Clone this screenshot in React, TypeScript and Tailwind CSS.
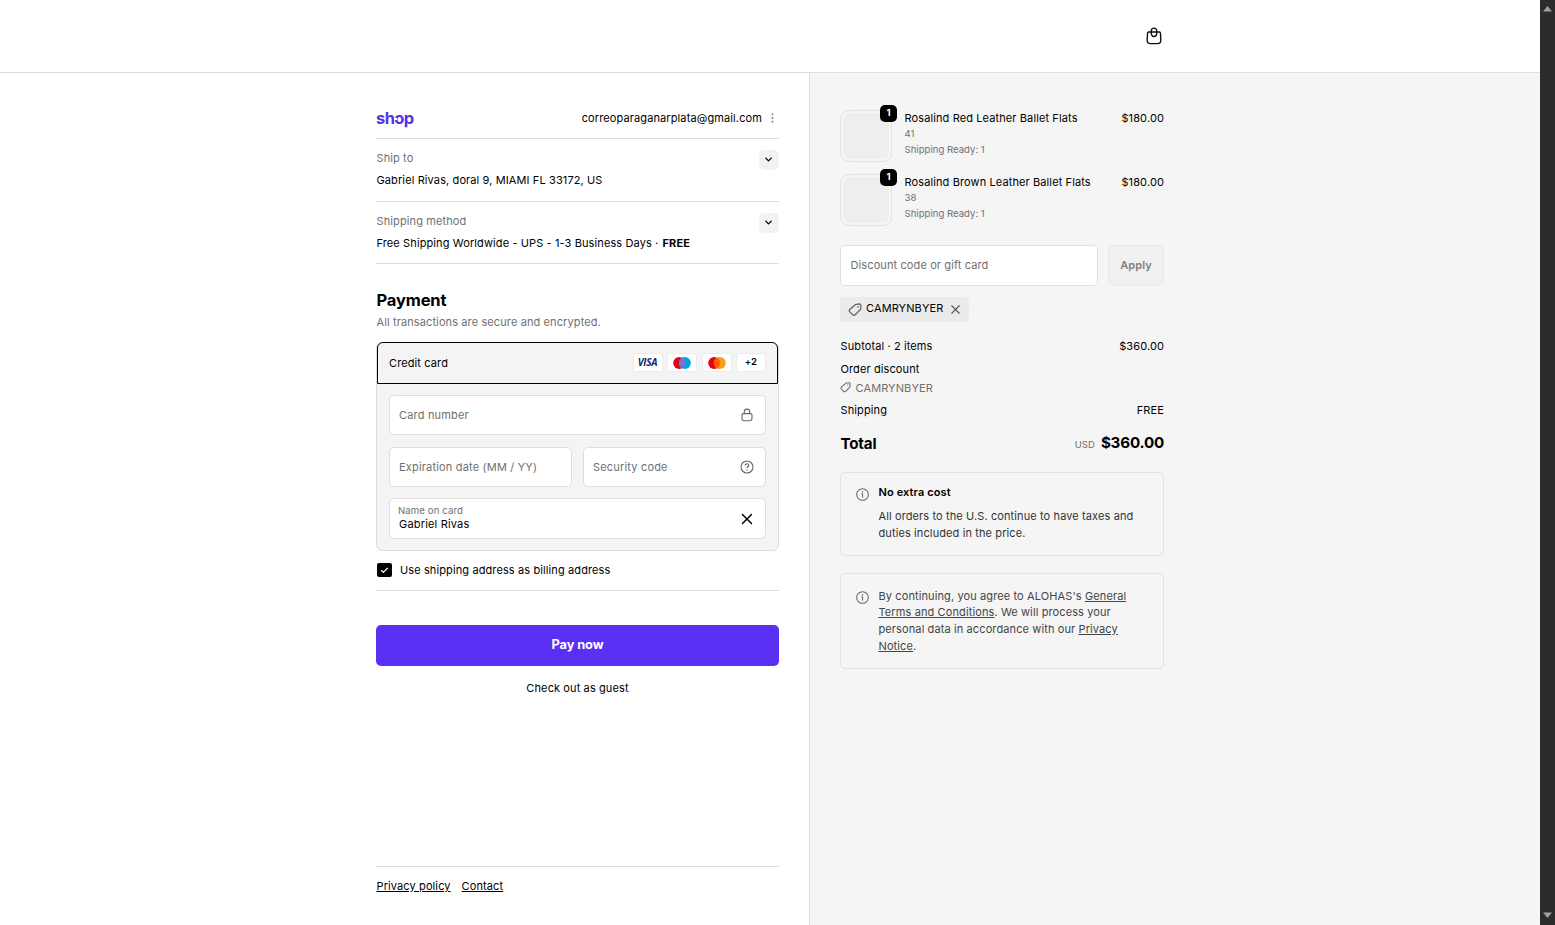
import type { ReactNode } from "react"
import { Check, ChevronDown, X } from "lucide-react"

const items = [
  { name: "Rosalind Red Leather Ballet Flats", size: "41", price: "$180.00" },
  { name: "Rosalind Brown Leather Ballet Flats", size: "38", price: "$180.00" },
]

function BagIcon() {
  return (
    <svg width="16" height="18" viewBox="0 0 16 18" fill="none" stroke="#111" strokeWidth="1.4">
      <path d="M2.8 5h10.400q1.200 0 1.300 1.200l.3 7.100q.1 3.300-3.200 3.300H4.400q-3.300 0-3.200-3.300l.3-7.100Q1.600 5 2.800 5Z" />
      <path d="M5.300 5.200v-1.200a2.700 2.900 0 0 1 5.400 0v2.600a2.700 2.900 0 0 1-5.400 0Z" />
    </svg>
  )
}

function TagIcon({ size }: { size: number }) {
  return (
    <svg width={size} height={size} viewBox="0 0 14 14" fill="none" stroke="#666" strokeWidth="1.3" className="shrink-0">
      <path d="M8.300 1.300 11.200 1q1.700-.1 1.700 1.600l-.2 3.200q-.1.600-.5 1l-5 5q-1.200 1.200-2.400 0L1.800 8.900q-1.200-1.200 0-2.400l5.400-4.700q.5-.4 1.100-.5Z" />
      <circle cx="10" cy="3.900" r=".8" fill="#666" stroke="none" />
    </svg>
  )
}

function InfoIcon() {
  return (
    <svg width="13" height="13" viewBox="0 0 14 14" fill="none" stroke="#666" strokeWidth="1.1" className="shrink-0">
      <circle cx="7" cy="7" r="6.300" />
      <path d="M5.900 6.300h1.200v3.900" />
      <circle cx="7" cy="4" r=".8" fill="#666" stroke="none" />
    </svg>
  )
}

function LockIcon() {
  return (
    <svg width="12" height="14" viewBox="0 0 12 14" fill="none" stroke="#666" strokeWidth="1.100">
      <path d="M2.300 5.600h7.400q1.300 0 1.300 1.400v3.300q0 2.500-2.500 2.500h-5Q1 12.800 1 10.300V7q0-1.400 1.300-1.400Z" />
      <path d="M3.300 5.600V3.800a2.700 2.700 0 0 1 5.400 0v1.800" />
    </svg>
  )
}

function HelpIcon() {
  return (
    <svg width="14" height="14" viewBox="0 0 14 14" fill="none" stroke="#666" strokeWidth="1.100">
      <circle cx="7" cy="7" r="6" />
      <path d="M5.200 5.500c0-1.100.8-1.700 1.800-1.700s1.800.7 1.800 1.600c0 1.300-1.800 1.300-1.800 2.600" />
      <circle cx="7" cy="9.900" r=".7" fill="#666" stroke="none" />
    </svg>
  )
}

function CardBadge({ children }: { children: ReactNode }) {
  return (
    <span className="flex h-[19px] w-[30px] items-center justify-center rounded-[3px] border border-[#ececec] bg-white">
      {children}
    </span>
  )
}

function Circles({ right, middle }: { right: string; middle: string }) {
  return (
    <svg width="20" height="14" viewBox="0 0 20 14">
      <circle cx="7.200" cy="7" r="6" fill="#eb001b" />
      <circle cx="12.800" cy="7" r="6" fill={right} />
      <path d="M10 1.700a6 6 0 0 1 0 10.600a6 6 0 0 1 0-10.600Z" fill={middle} />
    </svg>
  )
}

function Field({ label, children }: { label: string; children?: ReactNode }) {
  return (
    <div className="flex h-10 flex-1 items-center justify-between rounded-[5px] border border-[#dedede] bg-white pr-[11px] pl-[9px] text-[#707070]">
      <span className="pt-px tracking-[0.18px]">{label}</span>
      {children}
    </div>
  )
}

function Section({ label, children }: { label: string; children: ReactNode }) {
  return (
    <section className="flex justify-between border-b border-[#dedede]">
      <div className="pl-[0.5px]">
        <p className="pt-[11px] text-[#707070]">{label}</p>
        <p className="pt-[5.500px]">{children}</p>
      </div>
      <button className="mt-[11px] flex h-5 w-5 items-center justify-center rounded-[5px] bg-[#f2f2f2] pr-px pb-px">
        <ChevronDown size={11} strokeWidth={3} />
      </button>
    </section>
  )
}

function Summary() {
  return (
    <aside className="w-[324px] pt-[32px]">
      {items.map((item) => (
        <div key={item.name} className="flex h-[64px]">
          <div className="relative mt-[5px] h-[52px] w-[52px] rounded-[9px] border border-[#e2e2e2] bg-[#eeeeee] ring-2 ring-[#f7f7f7] ring-inset">
            <span className="absolute -top-[6px] -right-[6px] flex h-[17px] w-[17px] items-center justify-center rounded-[5px] bg-black text-[9.600px] font-bold text-white">
              1
            </span>
          </div>
          <div className="ml-[12.500px] flex-1 pt-[5px]">
            <p>{item.name}</p>
            <p className="-mt-px text-[9.600px] leading-[16px] tracking-normal text-[#707070]">{item.size}</p>
            <p className="text-[9.600px] leading-[16px] tracking-normal text-[#707070]">Shipping Ready: 1</p>
          </div>
          <p className="pt-[5px]">{item.price}</p>
        </div>
      ))}

      <div className="mt-[12px] flex h-[41px] gap-[10px]">
        <div className="flex w-[258px] items-center rounded-[5px] border border-[#dedede] bg-white pl-[9.500px] text-[#707070]">
          Discount code or gift card
        </div>
        <button className="flex-1 rounded-[5px] border border-[#ebebeb] bg-[#f0f0f0] font-semibold tracking-[0.1px] text-[#808080]">
          Apply
        </button>
      </div>

      <div className="mt-[11px] flex h-[25px] w-[129px] items-center rounded-[4px] bg-[#ebebeb] pl-2">
        <TagIcon size={14} />
        <span className="ml-[4px] pb-[2px]">CAMRYNBYER</span>
        <X size={15} strokeWidth={1.800} className="ml-[5px] text-[#555]" />
      </div>

      <div className="mt-[16px] flex justify-between pl-[0.5px]">
        <p>Subtotal · 2 items</p>
        <p>$360.00</p>
      </div>
      <p className="mt-[6px] pl-[0.5px]">Order discount</p>
      <div className="mt-[2px] flex items-center gap-[4.500px] text-[#707070]">
        <TagIcon size={11} />
        <span>CAMRYNBYER</span>
      </div>
      <div className="mt-[6px] flex justify-between pl-[0.5px]">
        <p>Shipping</p>
        <p>FREE</p>
      </div>
      <div className="mt-[13px] flex h-[24px] items-center justify-between pl-[0.5px] text-[15.200px] font-bold tracking-[-0.2px]">
        <p>Total</p>
        <p className="flex items-baseline">
          <span className="mr-[6px] text-[9.600px] font-normal tracking-normal text-[#707070]">USD</span>
          $360.00
        </p>
      </div>

      <div className="mt-[16px] flex h-[84px] rounded-[5px] border border-[#e2e2e2] pt-[11px] pl-[15px]">
        <div className="pt-[4px]">
          <InfoIcon />
        </div>
        <div className="ml-[9.500px]">
          <p className="font-semibold">No extra cost</p>
          <p className="mt-[7px] w-[262px] text-[#333]">
            All orders to the U.S. continue to have taxes and duties included in the price.
          </p>
        </div>
      </div>

      <div className="mt-[17px] flex h-[96px] rounded-[5px] border border-[#e2e2e2] pt-[13.500px] pl-[15px]">
        <div className="pt-[3px]">
          <InfoIcon />
        </div>
        <p className="ml-[9.500px] w-[256px] text-[#444]">
          By continuing, you agree to ALOHAS's <a className="underline">General Terms and Conditions</a>. We will process
          your personal data in accordance with our <a className="underline">Privacy Notice</a>.
        </p>
      </div>
    </aside>
  )
}

export default function App() {
  return (
    <div className="flex h-[925px] w-[1555px] overflow-hidden bg-white font-['Inter',sans-serif] text-[11px] leading-[16.800px] tracking-[0.110px] text-black">
      <div className="flex w-[1540px] flex-col">
        <header className="flex h-[73px] shrink-0 justify-end border-b border-[#dedede] pt-[27px] pr-[378.500px]">
          <BagIcon />
        </header>

        <div className="flex flex-1">
          <main className="flex w-[809px] flex-col pr-[30px] pl-[376px]">
            <div className="mt-[25px] flex h-[41px] items-center justify-between border-b border-[#dedede]">
              <span className="relative text-[16.500px] font-bold tracking-[-0.600px] text-[#5433eb]">
                shop
                <span className="absolute top-[8px] left-[18px] h-[2px] w-[3px] bg-white" />
              </span>
              <div className="flex items-center gap-[9px]">
                <span>correoparaganarplata@gmail.com</span>
                <svg width="3" height="10" viewBox="0 0 3 10" fill="#707070" className="mr-[5px]">
                  <circle cx="1.500" cy="1.300" r=".9" />
                  <circle cx="1.500" cy="5" r=".9" />
                  <circle cx="1.500" cy="8.700" r=".9" />
                </svg>
              </div>
            </div>

            <div className="grid grid-rows-[63px_62px]">
              <Section label="Ship to">Gabriel Rivas, doral 9, MIAMI FL 33172, US</Section>
              <Section label="Shipping method">
                Free Shipping Worldwide - UPS - 1-3 Business Days · <b className="ml-px font-bold">FREE</b>
              </Section>
            </div>

            <h2 className="mt-[24px] pl-[0.5px] text-[16.500px] leading-[24px] font-bold tracking-[-0.150px]">Payment</h2>
            <p className="mt-[2px] pl-[0.5px] text-[#707070]">All transactions are secure and encrypted.</p>

            <div className="mt-[11px] h-[209px] rounded-[6px] border border-[#dedede] bg-[#f4f4f4]">
              <div className="-mt-px flex h-[42px] items-center justify-between rounded-t-[6px] border border-black pr-[11px] pl-[11px]">
                <span className="pt-px">Credit card</span>
                <div className="flex gap-[4.500px]">
                  <CardBadge>
                    <span className="font-['Open_Sans',sans-serif] text-[10px] font-bold tracking-[-0.300px] text-[#1a1f71] italic">
                      VISA
                    </span>
                  </CardBadge>
                  <CardBadge>
                    <Circles right="#00a2e5" middle="#7375cf" />
                  </CardBadge>
                  <CardBadge>
                    <Circles right="#f79e1b" middle="#ff5f00" />
                  </CardBadge>
                  <CardBadge>
                    <span className="text-[9.600px] font-semibold">+2</span>
                  </CardBadge>
                </div>
              </div>
              <div className="flex flex-col gap-3 px-3 pt-[11px]">
                <div className="flex">
                  <Field label="Card number">
                    <span className="mr-px">
                      <LockIcon />
                    </span>
                  </Field>
                </div>
                <div className="flex gap-[11px]">
                  <Field label="Expiration date (MM / YY)" />
                  <Field label="Security code">
                    <HelpIcon />
                  </Field>
                </div>
                <div className="-mt-px flex h-[41px] items-center justify-between rounded-[5px] border border-[#dedede] bg-white pr-[9px] pl-[9px]">
                  <div>
                    <p className="-ml-px text-[9.600px] leading-[12px] text-[#707070]">Name on card</p>
                    <p className="leading-[14px] tracking-[0.180px]">Gabriel Rivas</p>
                  </div>
                  <X size={18} strokeWidth={1.900} className="mt-px" />
                </div>
              </div>
            </div>

            <div className="flex h-[40px] items-center gap-2 border-b border-[#dedede]">
              <span className="ml-px flex h-[14px] w-[15px] items-center justify-center rounded-[2px] bg-black">
                <Check size={9} strokeWidth={3} className="text-white" />
              </span>
              <span>Use shipping address as billing address</span>
            </div>

            <button className="mt-[34px] h-[41px] shrink-0 rounded-[5px] bg-[#5a31f4] pt-px text-[12.800px] font-bold tracking-[-0.100px] text-white">
              Pay now
            </button>
            <a className="mt-[14px] text-center">Check out as guest</a>

            <footer className="mt-auto flex h-[59px] gap-[11px] border-t border-[#dedede] pt-[11px] pl-[0.5px]">
              <a className="underline">Privacy policy</a>
              <a className="underline">Contact</a>
            </footer>
          </main>

          <div className="flex-1 border-l border-[#dedede] bg-[#f5f5f5] pl-[30px]">
            <Summary />
          </div>
        </div>
      </div>

      <div className="flex w-[15px] flex-col items-center justify-between bg-[#2c2c2c] pt-[6px] pb-[7px]">
        <svg width="9" height="6" viewBox="0 0 9 6" fill="#9f9f9f">
          <path d="M4.500 0 9 5.500H0Z" />
        </svg>
        <svg width="9" height="6" viewBox="0 0 9 6" fill="#9f9f9f">
          <path d="M0 .5h9L4.500 6Z" />
        </svg>
      </div>
    </div>
  )
}
